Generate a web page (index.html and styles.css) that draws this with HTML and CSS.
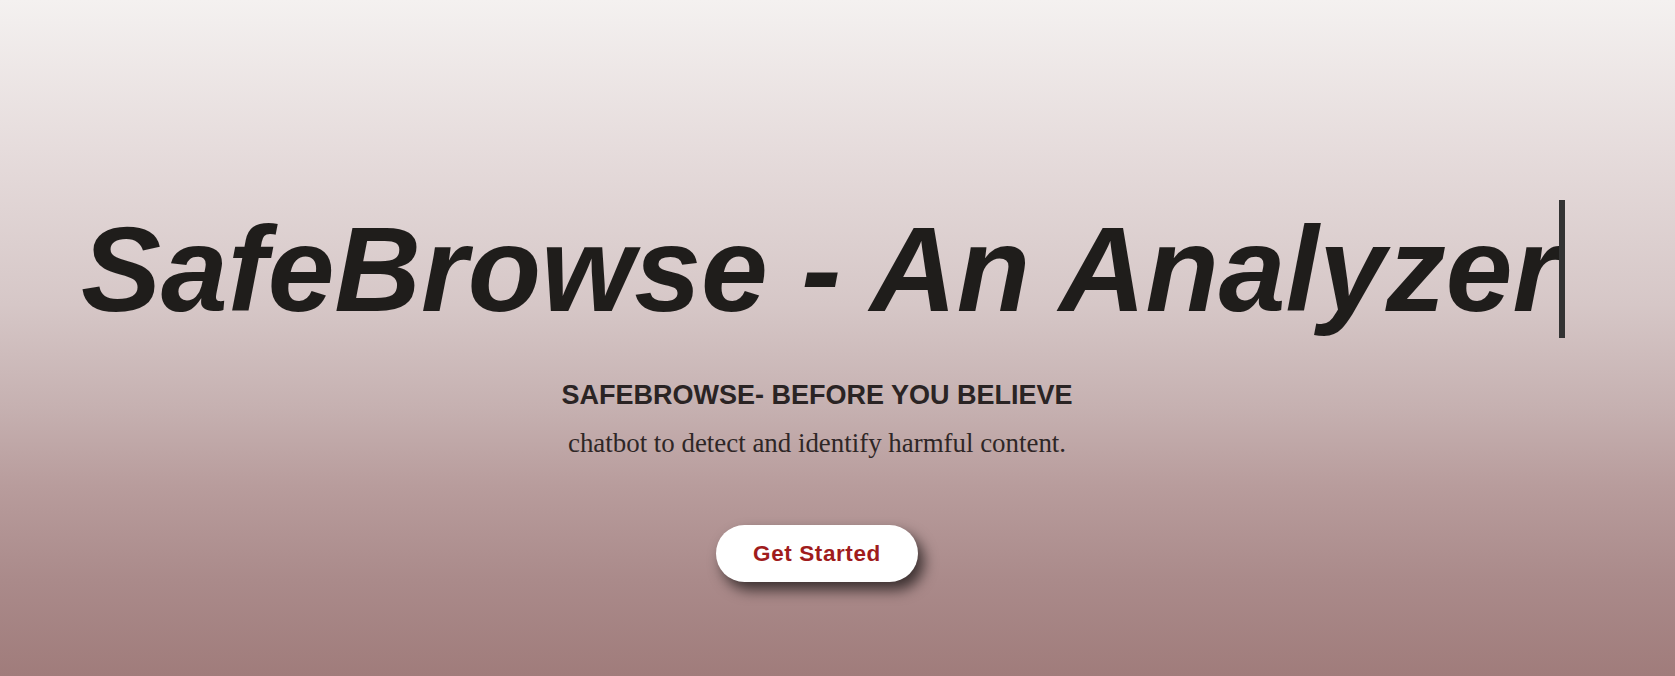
FILE: index.html
```html
<!DOCTYPE html>
<html lang="en">
<head>
<meta charset="utf-8">
<title>SafeBrowse</title>
<link rel="stylesheet" href="styles.css">
</head>
<body>
<main class="hero">
  <h1 class="title">SafeBrowse - An Analyzer</h1>
  <p class="tagline">SAFEBROWSE- BEFORE YOU BELIEVE</p>
  <p class="desc">chatbot to detect and identify harmful content.</p>
  <a class="cta" href="#">Get Started</a>
</main>
</body>
</html>
```
FILE: styles.css
```css
html, body {
  margin: 0;
  padding: 0;
  height: 100%;
}

body {
  background: linear-gradient(to bottom, #f4f1f0 0%, #e6dcdc 22%, #d6c7c7 45%, #c6b1b1 60%, #b89c9c 72%, #aa8a8a 86%, #a07c7b 100%);
  font-family: "Liberation Sans", Arial, sans-serif;
}

.hero {
  min-height: 100vh;
  box-sizing: border-box;
  display: flex;
  flex-direction: column;
  align-items: center;
  padding: 200px 41px 0 0;
}

.title {
  margin: 0 0 0 12px;
  font-family: "Liberation Sans", Arial, sans-serif;
  font-size: 120px;
  font-weight: 700;
  font-style: italic;
  line-height: normal;
  color: #1f1d1b;
  white-space: nowrap;
  overflow: hidden;
  border-right: 6px solid #333333;
}

.tagline {
  margin: 42px 0 0;
  font-family: "Liberation Sans", Arial, sans-serif;
  font-size: 27px;
  font-weight: 700;
  line-height: normal;
  color: #2a2424;
}

.desc {
  margin: 17px 0 0;
  font-family: "Liberation Serif", "Times New Roman", serif;
  font-size: 26.9px;
  line-height: normal;
  color: #2e2626;
}

.cta {
  margin-top: 66px;
  display: inline-block;
  height: 57px;
  line-height: 57px;
  padding: 0 37px;
  border-radius: 29px;
  background: #ffffff;
  color: #a01c1c;
  font-family: "Liberation Sans", Arial, sans-serif;
  font-size: 22.5px;
  font-weight: 700;
  letter-spacing: 0.6px;
  text-decoration: none;
  box-shadow: 6px 8px 14px rgba(0, 0, 0, 0.65);
}
```
